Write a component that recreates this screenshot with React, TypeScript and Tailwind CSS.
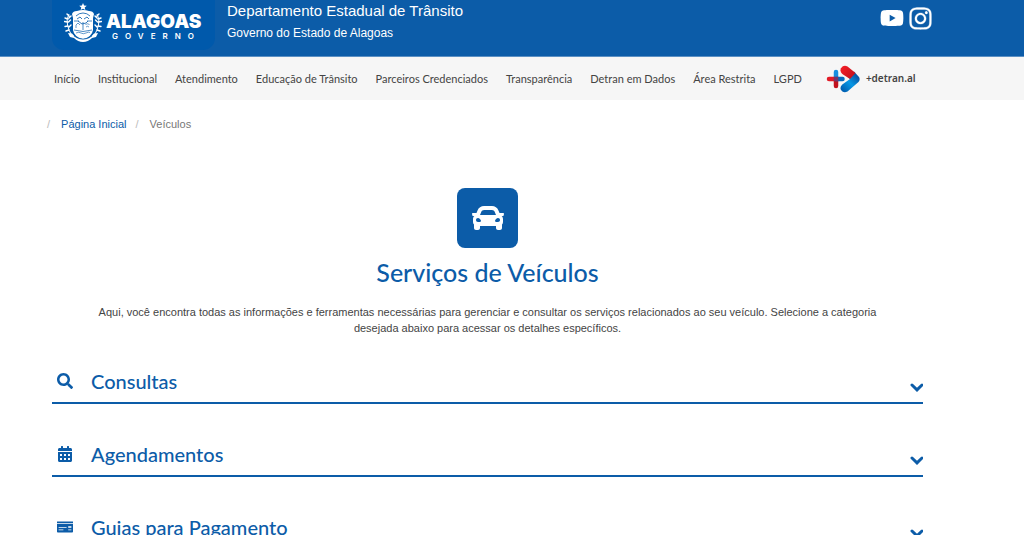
import { useState } from 'react';
import { FaCalendarAlt, FaCar, FaInstagram, FaMoneyCheck, FaSearch, FaYoutube } from 'react-icons/fa';

const menu = [
  'Início',
  'Institucional',
  'Atendimento',
  'Educação de Trânsito',
  'Parceiros Credenciados',
  'Transparência',
  'Detran em Dados',
  'Área Restrita',
  'LGPD',
];

const categories = [
  { id: 'consultas', title: 'Consultas', icon: FaSearch },
  { id: 'agendamentos', title: 'Agendamentos', icon: FaCalendarAlt },
  { id: 'guias', title: 'Guias para Pagamento', icon: FaMoneyCheck },
];

function Crest() {
  return (
    <svg width="38" height="40" viewBox="0 0 38 40" fill="none" aria-hidden="true">
      <path d="M19 0l1.1 2.5 2.7.2-2.1 1.8.7 2.6L19 5.7l-2.4 1.4.7-2.6-2.1-1.8 2.7-.2z" fill="#fff" />
      <path d="M8 11q1-3 5-3 6-2 12 0 4 0 5 3l-1 4v12Q28 34 19 36 10 34 9 27V15z" fill="#fff" />
      <path d="M10 18h5M23 18h5M19 19v8M10 27q9 3 18 0" stroke="#0059ab" strokeWidth=".7" />
      <path d="M12 13q3-3 7-3t7 3M13 16l3-2 2 2M20 16l3-2 2 2M14 18l4 3 4-1 2-2" stroke="#0059ab" strokeWidth=".8" />
      <path d="M12 25v-3l2-2 2 2M22 24q1.500-1.500 3 0M21.500 21.500q2-1.500 4 0" stroke="#0059ab" strokeWidth=".6" />
      <path d="M12 30q3-1.500 5 0t5 0 4-.5" stroke="#0059ab" strokeWidth=".6" />
      <path d="M5 11q-3 5-1.500 11T7 31M33 11q3 5 1.500 11T31 31" stroke="#fff" strokeWidth="1" />
      <path
        d="M5 13l-2-2M4 16l-3-1M3.500 19l-3-.5M4 23l-3 .5M5 27l-3 1M5 15l2-2M4.500 19l2-2M5 24l2-2M33 13l2-2M34 16l3-1M34.500 19l3-.5M34 23l3 .5M33 27l3 1M33 15l-2-2M33.500 19l-2-2M33 24l-2-2"
        stroke="#fff"
        strokeWidth="1.400"
        strokeLinecap="round"
      />
      <path d="M4 30l4 .5Q12 36 19 36t11-5.500l4-.5-2 4-4 1Q24 39 19 39T10 35l-4-1z" fill="#fff" />
      <path d="M10 33q9 6.500 18 0" stroke="#0059ab" strokeWidth=".7" />
    </svg>
  );
}

function DetranMark() {
  return (
    <svg width="34" height="28" viewBox="0 0 34 28" fill="none" aria-hidden="true">
      <defs>
        <linearGradient id="blueArm" x1="17" y1="25" x2="31" y2="11" gradientUnits="userSpaceOnUse">
          <stop stopColor="#0062b4" />
          <stop offset=".5" stopColor="#0797e5" />
          <stop offset="1" stopColor="#0757a5" />
        </linearGradient>
        <linearGradient id="redArm" x1="17" y1="4" x2="27" y2="12" gradientUnits="userSpaceOnUse">
          <stop stopColor="#ed1c24" />
          <stop offset="1" stopColor="#c3121d" />
        </linearGradient>
      </defs>
      <path d="M10 7v5" stroke="#168fe0" strokeWidth="4.500" strokeLinecap="round" />
      <path d="M10 15v6" stroke="#c3121d" strokeWidth="4.500" strokeLinecap="round" />
      <path d="M10 14h6.500" stroke="#0769ba" strokeWidth="4.500" strokeLinecap="round" />
      <path d="M3 14h5" stroke="#e21c27" strokeWidth="4.500" strokeLinecap="round" />
      <path d="M7.750 11.750h4.500v4.500h-4.500z" fill="#773568" />
      <path
        d="M24 14L16.300 19.500Q13.500 22 15 25q2.500 3.500 6.500 1.500L32.500 17q2-2.500.5-5L28 6.500 22 12z"
        fill="url(#blueArm)"
      />
      <path d="M24 14L16.300 9Q13.500 6.500 15 3.300q2.500-3.800 6.500-1.800L29.500 8z" fill="url(#redArm)" />
    </svg>
  );
}

function Chevron({ open }: { open: boolean }) {
  return (
    <svg width="14" height="9" viewBox="0 0 14 9" fill="none" aria-hidden="true" className={open ? 'mt-3 rotate-180' : 'mt-3'}>
      <path d="M3 2l5 4.800L13 2" stroke="currentColor" strokeWidth="3" strokeLinecap="round" />
    </svg>
  );
}

export default function App() {
  const [open, setOpen] = useState<string | null>(null);

  return (
    <div className="min-h-screen overflow-x-hidden bg-white font-['Liberation_Sans',sans-serif] text-[#444]">
      <header className="border-b border-[#5b90c4] bg-[#0c5ca8] pr-[91px] pl-[52px] text-white">
        <div className="flex items-start justify-between">
          <div className="flex items-start gap-3">
            <a href="#" className="flex h-[50px] w-[163px] items-start gap-1 rounded-b-xl bg-[#0059ab] pt-[3px] pl-3">
              <Crest />
              <span className="flex flex-col pt-[9px] font-[Inter,sans-serif]">
                <span className="text-[19px] leading-5 font-black">ALAGOAS</span>
                <span className="pl-1.5 text-[8px] leading-2 font-semibold tracking-[7px]">GOVERNO</span>
              </span>
            </a>
            <div>
              <p className="text-[15px] leading-[22px]">Departamento Estadual de Trânsito</p>
              <p className="text-xs leading-[22px]">Governo do Estado de Alagoas</p>
            </div>
          </div>
          <div className="flex h-14 items-start gap-1 pt-1.5">
            <a href="#" aria-label="YouTube"><FaYoutube size={24} /></a>
            <a href="#" aria-label="Instagram"><FaInstagram size={25} stroke="currentColor" strokeWidth={6} /></a>
          </div>
        </div>
      </header>

      <nav className="flex h-[43px] items-center bg-[#f6f6f6] pl-[54px] font-[Lato,sans-serif] text-[#444]">
        <ul className="flex gap-[18px] pt-px text-[11px] whitespace-nowrap">
          {menu.map((item) => (
            <li key={item}><a href="#">{item}</a></li>
          ))}
        </ul>
        <a href="#" className="ml-6 flex items-center gap-1.5 font-['Noto_Sans',sans-serif] text-[10px] font-semibold">
          <DetranMark />
          +detran.al
        </a>
      </nav>

      <main className="pr-[101px] pl-[52px]">
        <ol className="-ml-[5px] flex pt-4 text-[11px] leading-4 text-[#777]">
          <li><span className="mr-[11px] text-[#bbb]">/</span><a href="#" className="text-[#0c5ca8]">Página Inicial</a></li>
          <li><span className="mr-[11px] ml-[9px] text-[#bbb]">/</span>Veículos</li>
        </ol>

        <section className="flex flex-col items-center pt-14 text-center">
          <div className="flex h-[60px] w-[61px] items-center justify-center rounded-lg bg-[#0c5ca8] text-white">
            <FaCar size={32} />
          </div>
          <h1 className="mt-2 font-[Lato,sans-serif] text-[25px] leading-8 font-medium text-[#0c5ca8]">Serviços de Veículos</h1>
          <p className="mt-4 px-7 text-[11px] leading-4">
            Aqui, você encontra todas as informações e ferramentas necessárias para gerenciar e consultar os serviços
            relacionados ao seu veículo. Selecione a categoria desejada abaixo para acessar os detalhes específicos.
          </p>
        </section>

        <section className="mt-6 flex flex-col gap-[29px] text-[#0c5ca8]">
          {categories.map(({ id, title, icon: Icon }) => (
            <button
              key={id}
              type="button"
              aria-expanded={open === id}
              onClick={() => setOpen(open === id ? null : id)}
              className="flex h-11 w-full items-center border-b-2 border-[#0c5ca8] pl-[5px] text-left font-[Lato,sans-serif] text-xl font-medium"
            >
              <Icon size={16} />
              <span className="ml-[18px] flex-1">{title}</span>
              <Chevron open={open === id} />
            </button>
          ))}
        </section>
      </main>
    </div>
  );
}
